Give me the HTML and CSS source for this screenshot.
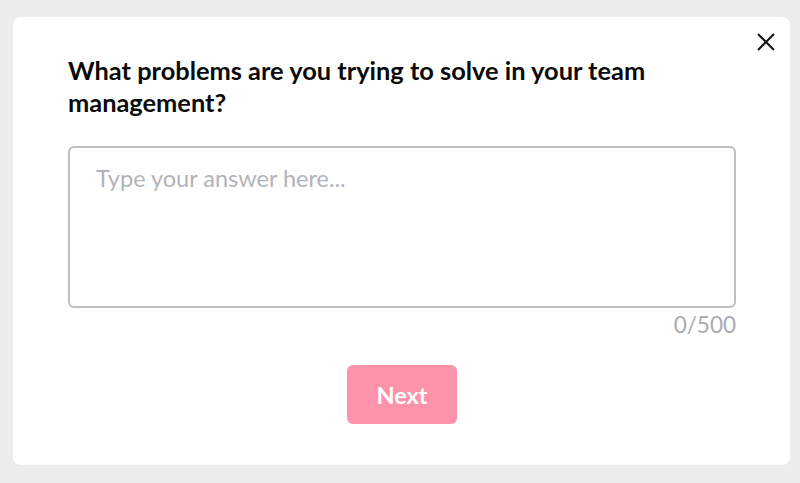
FILE: index.html
```html
<!DOCTYPE html>
<html>
<head>
    <title>Survey</title>
    <link rel="stylesheet" href="styles.css">
</head>
<body>
    <div class="modal">
        <button class="close-button" aria-label="Close">
            <svg width="18" height="18" viewBox="0 0 18 18"><path d="M1 1 L17 17 M17 1 L1 17" stroke="#111" stroke-width="2" fill="none"/></svg>
        </button>
        <div class="modal-body">
            <h2 class="question">What problems are you trying to solve in your team management?</h2>
            <textarea class="answer" placeholder="Type your answer here..."></textarea>
            <div class="counter">0/500</div>
            <div class="actions">
                <button class="next-button">Next</button>
            </div>
        </div>
    </div>
</body>
</html>
```
FILE: styles.css
```css
body {
    margin: 0;
    background-color: #ececec;
    font-family: Lato, "Liberation Sans", sans-serif;
    padding: 17px 10px 18px 13px;
}

.modal {
    position: relative;
    background-color: white;
    border-radius: 8px;
    height: 448px;
    box-sizing: border-box;
}

.close-button {
    position: absolute;
    top: 16px;
    right: 15px;
    background: none;
    border: none;
    padding: 0;
    cursor: pointer;
}

.modal-body {
    padding: 37px 54px 0 55px;
}

.question {
    margin: 0;
    font-size: 25.4px;
    font-weight: 700;
    line-height: 32px;
    color: #0a0a0a;
    padding-right: 40px;
}

.answer {
    display: block;
    width: 100%;
    height: 162px;
    box-sizing: border-box;
    margin-top: 28px;
    padding: 16px 26px;
    border: 2px solid #bfbfbf;
    border-radius: 6px;
    font-family: inherit;
    font-size: 23.5px;
    resize: none;
    outline: none;
}

.answer::placeholder {
    color: #b1b4b8;
}

.counter {
    text-align: right;
    font-size: 22.5px;
    color: #a9acb0;
    margin-top: 3px;
    line-height: 28px;
}

.actions {
    display: flex;
    justify-content: center;
    margin-top: 26px;
}

.next-button {
    width: 110px;
    height: 59px;
    background-color: #fd93ab;
    border: none;
    border-radius: 6px;
    color: white;
    font-family: inherit;
    font-size: 23.5px;
    font-weight: 700;
}
```
